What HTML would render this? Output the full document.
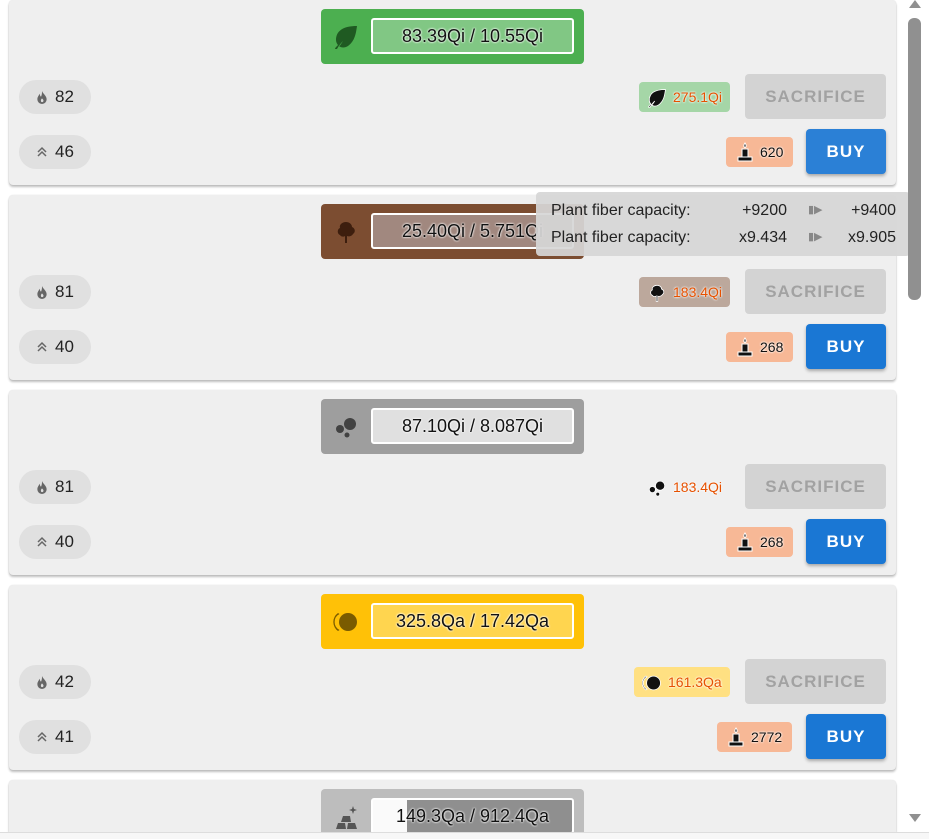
<!DOCTYPE html>
<html><head><meta charset="utf-8"><style>
*{box-sizing:border-box;margin:0;padding:0}
html,body{width:929px;height:839px;overflow:hidden}
body{background:#fff;font-family:"Liberation Sans",sans-serif;position:relative}
.card{position:absolute;left:9px;width:887px;height:185px;background:#efefef;border-radius:4px;box-shadow:0 2px 2px rgba(0,0,0,.25),0 0 1px rgba(0,0,0,.15);overflow:hidden}
.hd{position:absolute;left:312px;top:9px;width:263px;height:55px;border-radius:4px}
.ic{position:absolute;left:12px;top:15px;width:26px;height:26px}
.bar{position:absolute;left:50px;top:9px;width:203px;height:36px;border:2px solid #fff;border-radius:3px;overflow:hidden;font-size:18px;color:#111;text-align:center;line-height:32px;text-shadow:0 0 2px #fff,0 0 2px #fff}
.bar span{position:relative}
.chip{position:absolute;left:10px;width:72px;height:34px;border-radius:17px;background:#e0e0e0;font-size:17px;color:#222;line-height:34px;padding-left:36px}
.chip svg{position:absolute;left:17px;top:11px}
.btn{position:absolute;border-radius:4px;font-size:17px;font-weight:bold;letter-spacing:1px;text-align:center;line-height:45px;height:45px}
.sac{left:736px;top:74px;width:141px;background:#d3d3d3;color:#a2a2a2}
.buy{left:797px;top:129px;width:80px;background:#1a77d4;color:#fff;box-shadow:0 2px 3px rgba(0,0,0,.3)}
.cost{position:absolute;height:30px;top:82px;border-radius:4px;font-size:14px;color:#e65100;line-height:30px;padding:0 8px 0 34px;text-shadow:0 0 2px #fff,0 0 2px #fff}
.cost svg{position:absolute;left:8px;top:6px}
.cnd{position:absolute;height:30px;top:137px;border-radius:4px;background:#f7b896;font-size:14px;color:#111;line-height:30px;padding:0 10px 0 34px;text-shadow:0 0 2px #fff,0 0 2px #fff}
.cnd svg{position:absolute;left:9px;top:5px}
</style></head><body>

<svg width="0" height="0" style="position:absolute"><defs>
<symbol id="fire" viewBox="0 0 12 14"><path d="M6 0C7 3 11 5 11 9A5 5 0 0 1 1 9C1 6 3 5 3 3C4 4 4 6 5 6C6 4 6 2 6 0Z M6 8C5 9 4.5 10 5 11.5A1.5 1.5 0 0 0 7.5 11C8 10 7 9 6 8Z" fill="#666" fill-rule="evenodd"/></symbol>
<symbol id="up" viewBox="0 0 12 12"><path d="M2 6L6 2L10 6M2 10L6 6L10 10" stroke="#666" stroke-width="1.5" fill="none"/></symbol>
<symbol id="candle" viewBox="0 0 20 20"><path d="M10 1C11.5 3 11.5 5 10 5.5C8.5 5 8.5 3 10 1Z M7 7H13V15H7Z M3 15H17V19H3Z" fill="#111" stroke="#fff" stroke-width="1"/></symbol>
<symbol id="leaf" viewBox="0 0 26 26"><path d="M24 2C10 2 3 7 3 16C3 18 4 20 5 21C3 23 2 24 2 25L4 25C5 23 7 20 10 17C8 20 7 22 6 22C8 24 12 24 15 22C22 17 23 9 24 2Z" /></symbol>
<symbol id="tree" viewBox="0 0 26 26"><path d="M13 3C9 3 6 6 7 9C4 10 4 15 7 16C8 18 11 18 12 17V24H14V17C16 18 19 17 20 15C23 13 22 9 19 8C19 5 16 3 13 3Z"/></symbol>
<symbol id="dots" viewBox="0 0 26 26"><circle cx="17" cy="10" r="6"/><circle cx="7" cy="15" r="4"/><circle cx="14" cy="21" r="2.5"/></symbol>
<symbol id="moon" viewBox="0 0 26 26"><circle cx="15" cy="13" r="9"/><path d="M5 4A11 11 0 0 0 5 22L6.5 21A9 9 0 0 1 6.5 5Z"/></symbol>
<symbol id="gold" viewBox="0 0 26 26"><path d="M3 25L5 19H12L13 25Z M14 25L15 19H22L24 25Z M8 18L10 12H17L18 18Z M20 2L21 5L24 6L21 7L20 10L19 7L16 6L19 5Z"/></symbol>
</defs></svg>

<div class="card" style="top:0">
 <div class="hd" style="background:#4caf50"><svg class="ic" fill="#1f5a22"><use href="#leaf"/></svg><div class="bar" style="background:#81c784"><span>83.39Qi / 10.55Qi</span></div></div>
 <div class="chip" style="top:80px"><svg width="12" height="13"><use href="#fire"/></svg>82</div>
 <div class="chip" style="top:135px"><svg width="12" height="12"><use href="#up"/></svg>46</div>
 <div class="cost" style="left:630px;background:#a5d6a7"><svg width="20" height="20" fill="#111" stroke="#fff" stroke-width="1"><use href="#leaf"/></svg>275.1Qi</div>
 <div class="btn sac">SACRIFICE</div>
 <div class="cnd" style="left:717px"><svg width="20" height="20"><use href="#candle"/></svg>620</div>
 <div class="btn buy" style="background:#2b80d6">BUY</div>
</div>

<div class="card" style="top:195px">
 <div class="hd" style="background:#7c4d31"><svg class="ic" fill="#3d1e0e"><use href="#tree"/></svg><div class="bar" style="background:#a1887f"><span>25.40Qi / 5.751Qi</span></div></div>
 <div class="chip" style="top:80px"><svg width="12" height="13"><use href="#fire"/></svg>81</div>
 <div class="chip" style="top:135px"><svg width="12" height="12"><use href="#up"/></svg>40</div>
 <div class="cost" style="left:630px;background:#bca89c"><svg width="20" height="20" fill="#111" stroke="#fff" stroke-width="1"><use href="#tree"/></svg>183.4Qi</div>
 <div class="btn sac">SACRIFICE</div>
 <div class="cnd" style="left:717px"><svg width="20" height="20"><use href="#candle"/></svg>268</div>
 <div class="btn buy">BUY</div>
</div>

<div class="card" style="top:390px">
 <div class="hd" style="background:#9e9e9e"><svg class="ic" fill="#424242"><use href="#dots"/></svg><div class="bar" style="background:#e0e0e0"><span>87.10Qi / 8.087Qi</span></div></div>
 <div class="chip" style="top:80px"><svg width="12" height="13"><use href="#fire"/></svg>81</div>
 <div class="chip" style="top:135px"><svg width="12" height="12"><use href="#up"/></svg>40</div>
 <div class="cost" style="left:630px;background:#efefef"><svg width="20" height="20" fill="#111" stroke="#fff" stroke-width="1"><use href="#dots"/></svg>183.4Qi</div>
 <div class="btn sac">SACRIFICE</div>
 <div class="cnd" style="left:717px"><svg width="20" height="20"><use href="#candle"/></svg>268</div>
 <div class="btn buy">BUY</div>
</div>

<div class="card" style="top:585px">
 <div class="hd" style="background:#ffc107"><svg class="ic" fill="#7a5b00"><use href="#moon"/></svg><div class="bar" style="background:#ffd54f"><span>325.8Qa / 17.42Qa</span></div></div>
 <div class="chip" style="top:80px"><svg width="12" height="13"><use href="#fire"/></svg>42</div>
 <div class="chip" style="top:135px"><svg width="12" height="12"><use href="#up"/></svg>41</div>
 <div class="cost" style="left:625px;background:#ffe082"><svg width="20" height="20" fill="#111" stroke="#fff" stroke-width="1"><use href="#moon"/></svg>161.3Qa</div>
 <div class="btn sac">SACRIFICE</div>
 <div class="cnd" style="left:708px"><svg width="20" height="20"><use href="#candle"/></svg>2772</div>
 <div class="btn buy">BUY</div>
</div>

<div class="card" style="top:780px;height:52px;border-radius:4px 4px 0 0">
 <div class="hd" style="background:#bdbdbd"><svg class="ic" fill="#555"><use href="#gold"/></svg><div class="bar" style="background:linear-gradient(90deg,#fafafa 0,#fafafa 17%,#8f8f8f 17%)"><span>149.3Qa / 912.4Qa</span></div></div>
</div>
<div style="position:absolute;left:0;top:832px;width:929px;height:7px;background:#f7f7f7;border-top:1px solid #ddd"></div>

<div style="position:absolute;left:536px;top:192px;width:374px;height:64px;background:rgba(214,214,214,.93);border-radius:4px;font-size:16px;color:#222;line-height:27px;padding-top:5px">
 <div style="position:relative;height:27px"><span style="position:absolute;left:15px">Plant fiber capacity:</span><span style="position:absolute;right:123px">+9200</span><span style="position:absolute;left:272px;color:#888;font-size:11px">&#9646;&#9654;</span><span style="position:absolute;right:14px">+9400</span></div>
 <div style="position:relative;height:27px"><span style="position:absolute;left:15px">Plant fiber capacity:</span><span style="position:absolute;right:123px">x9.434</span><span style="position:absolute;left:272px;color:#888;font-size:11px">&#9646;&#9654;</span><span style="position:absolute;right:14px">x9.905</span></div>
</div>

<div style="position:absolute;left:908px;top:18px;width:13px;height:282px;background:#909090;border-radius:6px"></div>
<div style="position:absolute;left:909px;top:0;width:0;height:0;border-left:6px solid transparent;border-right:6px solid transparent;border-bottom:8px solid #909090"></div>
<div style="position:absolute;left:909px;top:814px;width:0;height:0;border-left:6px solid transparent;border-right:6px solid transparent;border-top:8px solid #909090"></div>
</body></html>
